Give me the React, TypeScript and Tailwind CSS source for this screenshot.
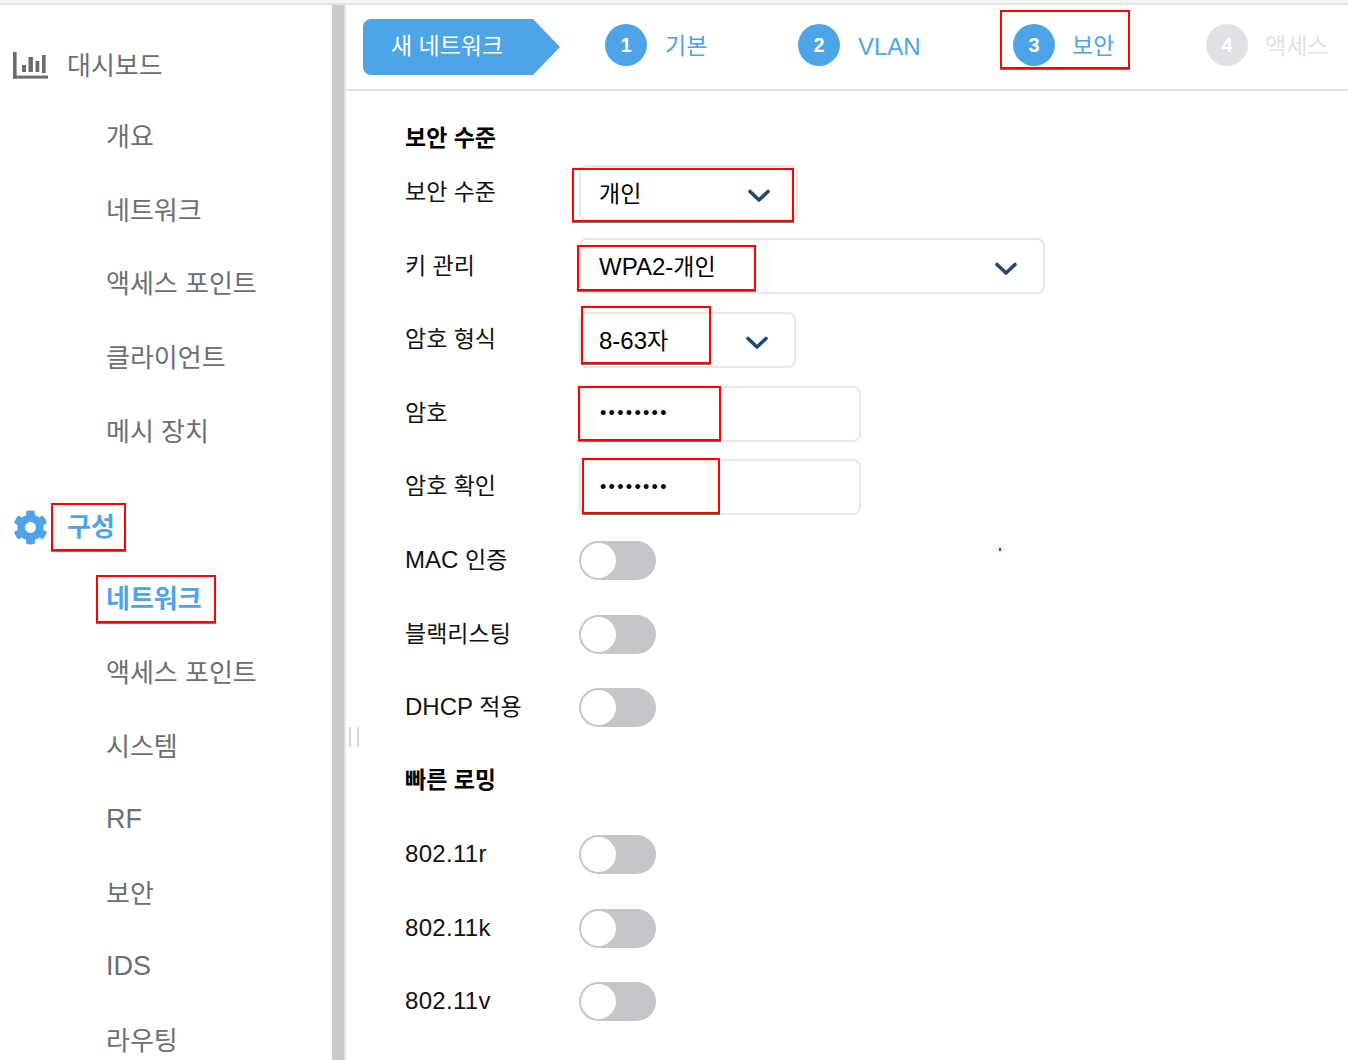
import React from "react";
import { FaCog } from "react-icons/fa";

const SANS = "font-['Liberation_Sans','Noto_Sans_CJK_KR',sans-serif]";

const RedBox = ({ className }: { className: string }) => (
  <div
    className={`absolute border-2 border-[#f00] shadow-[0_1px_0_#777] pointer-events-none ${className}`}
  />
);

const ChartIcon = () => (
  <svg width="36" height="27" viewBox="0 0 36 27" fill="#6a6a70" className="shrink-0">
    <rect x="0" y="0" width="3.6" height="26.5" />
    <rect x="0" y="23.6" width="35" height="3" />
    <rect x="9" y="13" width="4" height="7" />
    <rect x="15.5" y="5" width="4.4" height="15" />
    <rect x="22.5" y="9" width="3.8" height="11" />
    <rect x="29" y="3" width="3.6" height="18" />
  </svg>
);

const Chevron = () => (
  <svg width="22" height="14" viewBox="0 0 22 14" fill="none" className="shrink-0 mt-[6px]">
    <path d="M2 2.5 L11 11 L20 2.5" stroke="#1f4a75" strokeWidth="3.6" strokeLinecap="round" strokeLinejoin="round" />
  </svg>
);

const SideItem = ({ label, latin, active }: { label: string; latin?: boolean; active?: boolean }) => (
  <div className="h-[73.7px] flex items-center pl-[106px] pt-[3px]">
    <span
      className={`${latin ? "text-[27px] -mt-[3px]" : "text-[26px]"} ${
        active ? "text-[#4da4e7] font-bold" : "text-[#6d6d72]"
      }`}
    >
      {label}
    </span>
  </div>
);

const Step = ({
  n,
  label,
  latin,
  off,
  layout,
}: {
  n: number;
  label: string;
  latin?: boolean;
  off?: boolean;
  layout: string;
}) => (
  <div className={`${layout} flex items-center shrink-0`}>
    <div
      className={`w-[42px] h-[42px] rounded-full flex items-center justify-center text-white font-bold text-[20px] ${
        off ? "bg-[#e0e1e5]" : "bg-[#4da4e7]"
      }`}
    >
      {n}
    </div>
    <span
      className={`pt-[3px] ${latin ? "text-[24px]" : "text-[23px]"} ${off ? "text-[#e0e1e5]" : "text-[#4da4e7]"}`}
    >
      {label}
    </span>
  </div>
);

const Row = ({ label, children }: { label: React.ReactNode; children: React.ReactNode }) => (
  <div className="h-[73.6px] flex items-center">
    <div className="w-[174px] shrink-0 pb-[1px] text-[#111]">{label}</div>
    {children}
  </div>
);

const Select = ({ width, children }: { width: string; children: React.ReactNode }) => (
  <div
    className={`${width} h-[56px] border-2 border-[#e6e6e8] rounded-lg flex items-center justify-between pl-[18px] pr-[26px] text-black`}
  >
    {children}
  </div>
);

const Password = () => (
  <input
    type="password"
    readOnly
    value="password"
    className="w-[282px] h-[56px] border-2 border-[#e8e8ea] rounded-lg pl-[19px] text-[18px] tracking-[2.3px] text-black outline-none"
  />
);

const Toggle = () => (
  <div className="w-[77px] h-[39px] rounded-full bg-[#c5c6ca] p-[2px]">
    <div className="w-[35px] h-[35px] rounded-full bg-white" />
  </div>
);

const Ko = ({ children }: { children: React.ReactNode }) => <span className="text-[23px]">{children}</span>;
const La = ({ children }: { children: React.ReactNode }) => <span className="text-[24px]">{children}</span>;
const Num = ({ children }: { children: React.ReactNode }) => (
  <span className="text-[24px] tracking-[0.3px]">{children}</span>
);

export default function App() {
  return (
    <div className={`relative w-[1348px] h-[1060px] overflow-hidden bg-white ${SANS}`}>
      <div className="h-[3px] bg-[#f5f5f7]" />
      <div className="h-[2px] bg-[#e2e2e7]" />
      <div className="flex h-[1055px]">
        {/* sidebar */}
        <aside className="w-[332px] shrink-0 pt-[26px]">
          <div className="h-[68px] flex items-center pl-[13px] gap-[18px]">
            <ChartIcon />
            <span className="text-[26px] text-[#6d6d72] pt-[2px]">대시보드</span>
          </div>
          <SideItem label="개요" />
          <SideItem label="네트워크" />
          <SideItem label="액세스 포인트" />
          <SideItem label="클라이언트" />
          <SideItem label="메시 장치" />
          <div className="h-[68px] mt-[26px] flex items-center pl-[13px] gap-[19px]">
            <FaCog className="text-[#4da4e7] shrink-0 w-[35px] h-[35px]" />
            <span className="text-[26px] text-[#4da4e7] font-bold">구성</span>
          </div>
          <SideItem label="네트워크" active />
          <SideItem label="액세스 포인트" />
          <SideItem label="시스템" />
          <SideItem label="RF" latin />
          <SideItem label="보안" />
          <SideItem label="IDS" latin />
          <SideItem label="라우팅" />
        </aside>
        <div className="w-[12px] shrink-0 bg-[#c9c9c9]" />
        <div className="w-[2px] shrink-0 bg-[#e2e2e7]" />

        {/* main */}
        <main className="flex-1 min-w-0 relative">
          <div className="h-[86px] border-b-2 border-[#e2e2e7] flex items-center pl-[17px] pb-[4px]">
            <div className="w-[197px] h-[56px] shrink-0 mr-[45px] mt-[4px] pb-[2px] bg-[#4da4e7] rounded-l-lg flex items-center pl-[28px] text-white text-[23px] [clip-path:polygon(0_0,170px_0,100%_50%,170px_100%,0_100%)]">
              새 네트워크
            </div>
            <Step n={1} label="기본" layout="w-[193px] gap-[18px]" />
            <Step n={2} label="VLAN" latin layout="w-[215px] gap-[18px]" />
            <Step n={3} label="보안" layout="w-[193px] gap-[17px]" />
            <Step n={4} label="액세스" off layout="w-[142px] gap-[17px]" />
          </div>

          <div className="absolute left-[3px] top-[722px] w-[10px] h-[20px] border-x-2 border-[#d5d5d8]" />

          <div className="pl-[59px] pt-[26px]">
            <div className="h-[39px] flex items-center pt-[3px] font-bold text-[23px] text-black">보안 수준</div>
            <Row label={<Ko>보안 수준</Ko>}>
              <Select width="w-[219px]">
                <span className="pt-[2px]">
                  <Ko>개인</Ko>
                </span>
                <Chevron />
              </Select>
            </Row>
            <Row label={<Ko>키 관리</Ko>}>
              <Select width="w-[466px]">
                <span className="pt-[2px]">
                  <La>WPA2-</La>
                  <Ko>개인</Ko>
                </span>
                <Chevron />
              </Select>
            </Row>
            <Row label={<Ko>암호 형식</Ko>}>
              <Select width="w-[217px]">
                <span className="pt-[2px]">
                  <La>8-63</La>
                  <Ko>자</Ko>
                </span>
                <Chevron />
              </Select>
            </Row>
            <Row label={<Ko>암호</Ko>}>
              <Password />
            </Row>
            <Row label={<Ko>암호 확인</Ko>}>
              <Password />
            </Row>
            <Row
              label={
                <>
                  <La>MAC </La>
                  <Ko>인증</Ko>
                </>
              }
            >
              <Toggle />
            </Row>
            <Row label={<Ko>블랙리스팅</Ko>}>
              <Toggle />
            </Row>
            <Row
              label={
                <>
                  <La>DHCP </La>
                  <Ko>적용</Ko>
                </>
              }
            >
              <Toggle />
            </Row>
            <div className="h-[73px] flex items-center pb-[3px] font-bold text-[23px] text-black">빠른 로밍</div>
            <Row label={<Num>802.11r</Num>}>
              <Toggle />
            </Row>
            <Row label={<Num>802.11k</Num>}>
              <Toggle />
            </Row>
            <Row label={<Num>802.11v</Num>}>
              <Toggle />
            </Row>
          </div>
        </main>
      </div>

      {/* annotations */}
      <RedBox className="left-[51px] top-[503px] w-[75px] h-[48px]" />
      <RedBox className="left-[96px] top-[575px] w-[120px] h-[48px]" />
      <RedBox className="left-[1000px] top-[10px] w-[130px] h-[59px]" />
      <RedBox className="left-[572px] top-[168px] w-[222px] h-[54px]" />
      <RedBox className="left-[577px] top-[245px] w-[179px] h-[46px]" />
      <RedBox className="left-[581px] top-[306px] w-[130px] h-[58px]" />
      <RedBox className="left-[578px] top-[386px] w-[143px] h-[55px]" />
      <RedBox className="left-[582px] top-[458px] w-[138px] h-[56px]" />
      <div className="absolute left-[999px] top-[548px] w-[2px] h-[3px] bg-[#e00]" />
    </div>
  );
}
